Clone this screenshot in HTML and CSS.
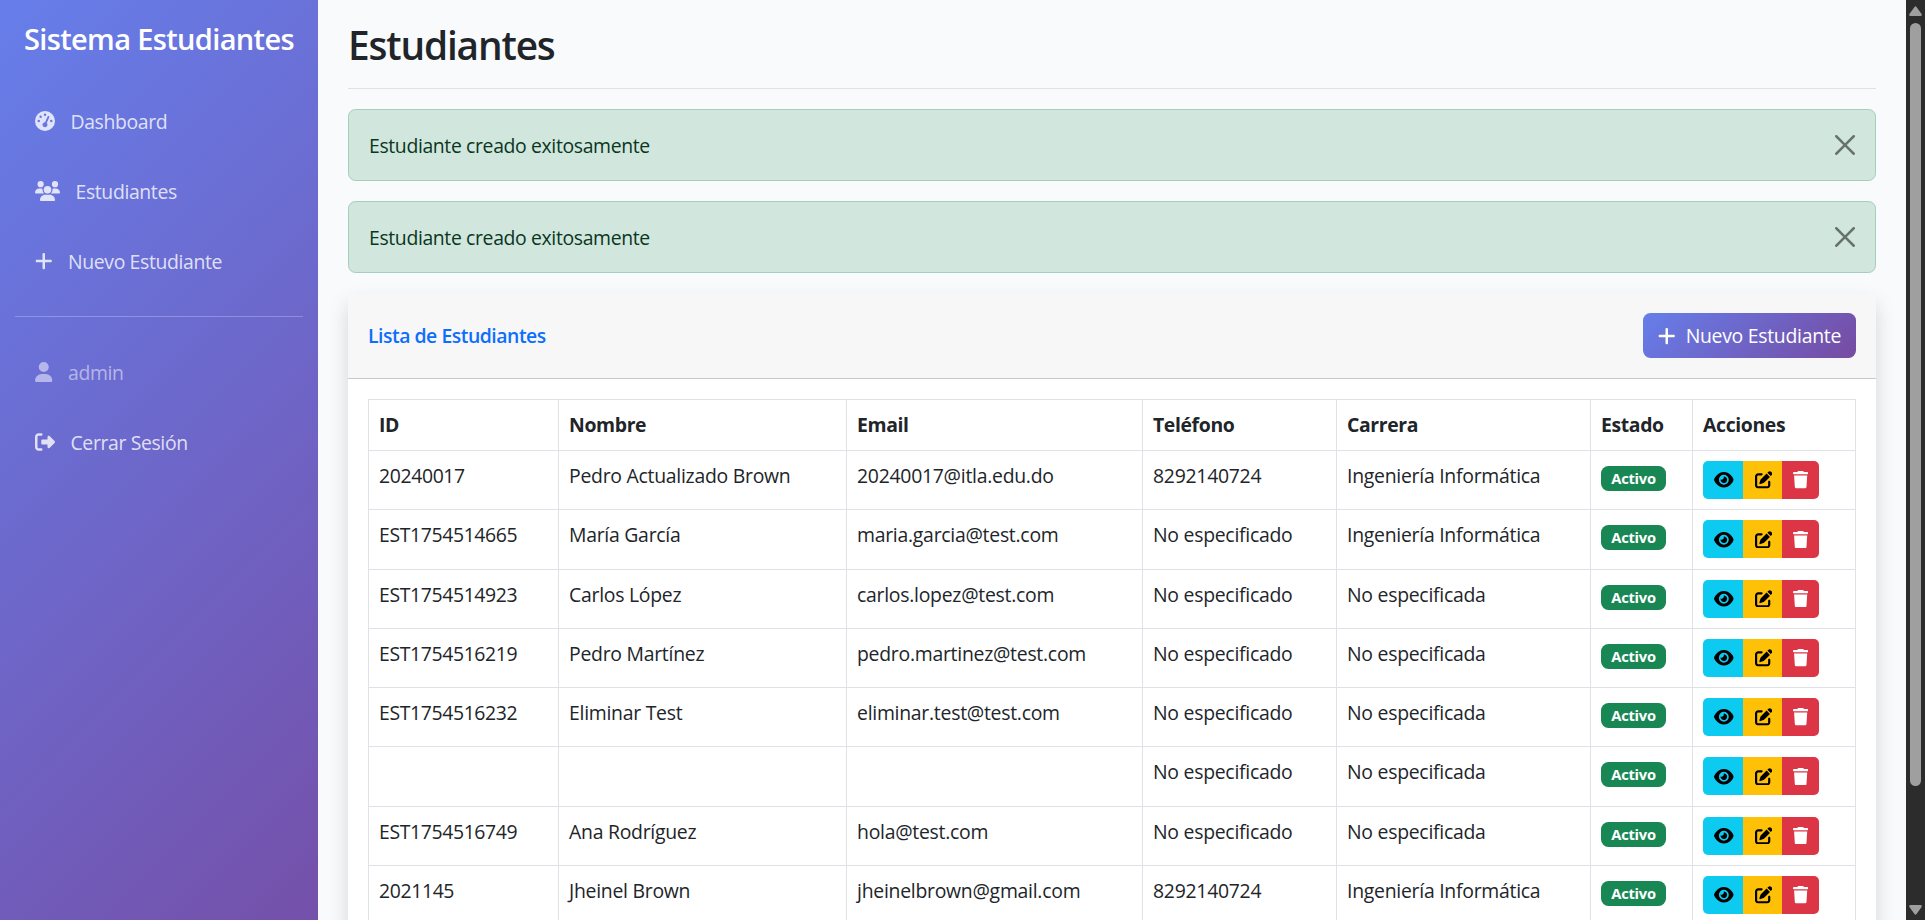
FILE: index.html
```html
<!DOCTYPE html>
<html lang="es">
<head>
<meta charset="utf-8">
<title>Estudiantes</title>
<link rel="stylesheet" href="styles.css">
</head>
<body>
<svg class="sprite" aria-hidden="true">
  <symbol id="gauge" viewBox="0 0 512 512"><path d="M0 256a256 256 0 1 1 512 0A256 256 0 1 1 0 256zM288 96a32 32 0 1 0 -64 0 32 32 0 1 0 64 0zM256 416c35.300 0 64-28.700 64-64c0-17.400-6.900-33.100-18.100-44.600L366 161.700c5.300-12.100-.2-26.300-12.300-31.600s-26.300 .2-31.600 12.300L257.900 288c-.6 0-1.300 0-1.900 0c-35.300 0-64 28.700-64 64s28.700 64 64 64zM176 144a32 32 0 1 0 -64 0 32 32 0 1 0 64 0zM96 288a32 32 0 1 0 0-64 32 32 0 1 0 0 64zm352-32a32 32 0 1 0 -64 0 32 32 0 1 0 64 0z"/></symbol>
  <symbol id="users" viewBox="0 0 640 512"><path d="M144 0a80 80 0 1 1 0 160A80 80 0 1 1 144 0zM512 0a80 80 0 1 1 0 160A80 80 0 1 1 512 0zM0 298.700C0 239.800 47.800 192 106.700 192h42.700c15.900 0 31 3.500 44.600 9.700c-1.300 7.200-1.900 14.700-1.900 22.300c0 38.200 16.800 72.500 43.300 96c-.2 0-.4 0-.7 0H21.300C9.600 320 0 310.400 0 298.700zM405.300 320c-.2 0-.4 0-.7 0c26.600-23.500 43.300-57.800 43.300-96c0-7.600-.7-15-1.900-22.300c13.600-6.300 28.700-9.700 44.600-9.700h42.700C592.200 192 640 239.800 640 298.700c0 11.800-9.600 21.300-21.300 21.300H405.300zM224 224a96 96 0 1 1 192 0 96 96 0 1 1 -192 0zM128 485.300C128 411.700 187.700 352 261.300 352H378.700C452.300 352 512 411.700 512 485.300c0 14.700-11.900 26.700-26.700 26.700H154.700c-14.700 0-26.700-11.900-26.700-26.700z"/></symbol>
  <symbol id="plus" viewBox="0 0 448 512"><path d="M256 80c0-17.700-14.300-32-32-32s-32 14.300-32 32V224H48c-17.700 0-32 14.300-32 32s14.300 32 32 32H192V432c0 17.700 14.300 32 32 32s32-14.300 32-32V288H400c17.700 0 32-14.300 32-32s-14.300-32-32-32H256V80z"/></symbol>
  <symbol id="user" viewBox="0 0 448 512"><path d="M224 256A128 128 0 1 0 224 0a128 128 0 1 0 0 256zm-45.700 48C79.800 304 0 383.800 0 482.300C0 498.700 13.300 512 29.700 512H418.300c16.400 0 29.700-13.300 29.700-29.700C448 383.800 368.200 304 269.700 304H178.300z"/></symbol>
  <symbol id="logout" viewBox="0 0 512 512"><path d="M377.900 105.900L500.700 228.700c7.200 7.200 11.300 17.100 11.300 27.300s-4.100 20.100-11.300 27.300L377.900 406.100c-6.400 6.400-15 9.900-24 9.900c-18.700 0-33.900-15.200-33.900-33.900l0-62.100-128 0c-17.700 0-32-14.300-32-32l0-64c0-17.700 14.300-32 32-32l128 0 0-62.100c0-18.700 15.200-33.900 33.900-33.900c9 0 17.600 3.600 24 9.900zM160 96L96 96c-17.700 0-32 14.300-32 32l0 256c0 17.700 14.300 32 32 32l64 0c17.700 0 32 14.300 32 32s-14.300 32-32 32l-64 0c-53 0-96-43-96-96L0 128C0 75 43 32 96 32l64 0c17.700 0 32 14.300 32 32s-14.300 32-32 32z"/></symbol>
  <symbol id="eye" viewBox="0 0 576 512"><path d="M288 32c-80.800 0-145.500 36.800-192.600 80.600C48.600 156 17.300 208 2.500 243.700c-3.300 7.900-3.300 16.700 0 24.600C17.300 304 48.600 356 95.400 399.400C142.500 443.200 207.200 480 288 480s145.500-36.800 192.600-80.600c46.800-43.500 78.100-95.400 93-131.100c3.300-7.900 3.300-16.700 0-24.600c-14.900-35.700-46.200-87.700-93-131.100C433.500 68.800 368.800 32 288 32zM144 256a144 144 0 1 1 288 0 144 144 0 1 1 -288 0zm144-64c0 35.300-28.700 64-64 64c-7.100 0-13.900-1.200-20.300-3.300c-5.500-1.800-11.900 1.600-11.700 7.400c.3 6.900 1.300 13.800 3.200 20.700c13.700 51.200 66.400 81.600 117.600 67.900s81.600-66.400 67.900-117.600c-11.100-41.500-47.800-69.400-88.600-71.100c-5.800-.2-9.200 6.100-7.400 11.700c2.100 6.400 3.300 13.200 3.300 20.300z"/></symbol>
  <symbol id="edit" viewBox="0 0 512 512"><path d="M471.600 21.700c-21.900-21.900-57.300-21.900-79.200 0L362.300 51.700l97.900 97.900 30.100-30.100c21.900-21.900 21.900-57.300 0-79.200L471.600 21.700zm-299.200 220c-6.100 6.100-10.800 13.600-13.500 21.900l-29.600 88.800c-2.900 8.600-.6 18.100 5.800 24.600s15.900 8.700 24.600 5.800l88.800-29.600c8.200-2.700 15.700-7.400 21.900-13.500L437.700 172.300 339.700 74.300 172.400 241.700zM96 64C43 64 0 107 0 160V416c0 53 43 96 96 96H352c53 0 96-43 96-96V320c0-17.700-14.300-32-32-32s-32 14.300-32 32v96c0 17.700-14.300 32-32 32H96c-17.700 0-32-14.300-32-32V160c0-17.700 14.300-32 32-32h96c17.700 0 32-14.300 32-32s-14.300-32-32-32H96z"/></symbol>
  <symbol id="trash" viewBox="0 0 448 512"><path d="M135.200 17.700L128 32H32C14.300 32 0 46.300 0 64S14.300 96 32 96H416c17.700 0 32-14.300 32-32s-14.300-32-32-32H320l-7.200-14.300C307.400 6.800 296.300 0 284.200 0H163.800c-12.100 0-23.200 6.800-28.600 17.700zM416 128H32L53.200 467c1.600 25.300 22.600 45 47.900 45H346.900c25.300 0 46.300-19.700 47.900-45L416 128z"/></symbol>
  <symbol id="close" viewBox="0 0 16 16"><path d="M.293.293a1 1 0 0 1 1.414 0L8 6.586 14.293.293a1 1 0 1 1 1.414 1.414L9.414 8l6.293 6.293a1 1 0 0 1-1.414 1.414L8 9.414l-6.293 6.293a1 1 0 0 1-1.414-1.414L6.586 8 .293 1.707a1 1 0 0 1 0-1.414z"/></symbol>
</svg>
<div class="app">
  <nav class="sidebar">
    <h4 class="brand">Sistema Estudiantes</h4>
    <a class="nav-link"><svg class="icon w-512"><use href="#gauge"/></svg><span>Dashboard</span></a>
    <a class="nav-link"><svg class="icon w-640"><use href="#users"/></svg><span>Estudiantes</span></a>
    <a class="nav-link"><svg class="icon w-448"><use href="#plus"/></svg><span>Nuevo Estudiante</span></a>
    <hr class="divider">
    <a class="nav-link muted"><svg class="icon w-448"><use href="#user"/></svg><span>admin</span></a>
    <a class="nav-link"><svg class="icon w-512"><use href="#logout"/></svg><span>Cerrar Sesión</span></a>
  </nav>
  <main class="main">
    <header class="page-head"><h1 class="title">Estudiantes</h1></header>
    <div class="alert"><span>Estudiante creado exitosamente</span><svg class="close"><use href="#close"/></svg></div>
    <div class="alert"><span>Estudiante creado exitosamente</span><svg class="close"><use href="#close"/></svg></div>
    <section class="card">
      <div class="card-header">
        <h6 class="card-title">Lista de Estudiantes</h6>
        <a class="btn-new"><svg class="icon w-448"><use href="#plus"/></svg><span>Nuevo Estudiante</span></a>
      </div>
      <div class="card-body">
        <table class="table">
          <colgroup><col class="c-id"><col class="c-name"><col class="c-mail"><col class="c-tel"><col class="c-career"><col class="c-state"><col class="c-act"></colgroup>
          <thead><tr><th>ID</th><th>Nombre</th><th>Email</th><th>Teléfono</th><th>Carrera</th><th>Estado</th><th>Acciones</th></tr></thead>
          <tbody>
            <tr><td>20240017</td><td>Pedro Actualizado Brown</td><td>20240017@itla.edu.do</td><td>8292140724</td><td>Ingeniería Informática</td><td><span class="badge">Activo</span></td><td><div class="group"><a class="act info"><svg class="sm eye"><use href="#eye"/></svg></a><a class="act warn"><svg class="sm edit"><use href="#edit"/></svg></a><a class="act danger"><svg class="sm trash"><use href="#trash"/></svg></a></div></td></tr>
            <tr><td>EST1754514665</td><td>María García</td><td>maria.garcia@test.com</td><td>No especificado</td><td>Ingeniería Informática</td><td><span class="badge">Activo</span></td><td><div class="group"><a class="act info"><svg class="sm eye"><use href="#eye"/></svg></a><a class="act warn"><svg class="sm edit"><use href="#edit"/></svg></a><a class="act danger"><svg class="sm trash"><use href="#trash"/></svg></a></div></td></tr>
            <tr><td>EST1754514923</td><td>Carlos López</td><td>carlos.lopez@test.com</td><td>No especificado</td><td>No especificada</td><td><span class="badge">Activo</span></td><td><div class="group"><a class="act info"><svg class="sm eye"><use href="#eye"/></svg></a><a class="act warn"><svg class="sm edit"><use href="#edit"/></svg></a><a class="act danger"><svg class="sm trash"><use href="#trash"/></svg></a></div></td></tr>
            <tr><td>EST1754516219</td><td>Pedro Martínez</td><td>pedro.martinez@test.com</td><td>No especificado</td><td>No especificada</td><td><span class="badge">Activo</span></td><td><div class="group"><a class="act info"><svg class="sm eye"><use href="#eye"/></svg></a><a class="act warn"><svg class="sm edit"><use href="#edit"/></svg></a><a class="act danger"><svg class="sm trash"><use href="#trash"/></svg></a></div></td></tr>
            <tr><td>EST1754516232</td><td>Eliminar Test</td><td>eliminar.test@test.com</td><td>No especificado</td><td>No especificada</td><td><span class="badge">Activo</span></td><td><div class="group"><a class="act info"><svg class="sm eye"><use href="#eye"/></svg></a><a class="act warn"><svg class="sm edit"><use href="#edit"/></svg></a><a class="act danger"><svg class="sm trash"><use href="#trash"/></svg></a></div></td></tr>
            <tr><td></td><td></td><td></td><td>No especificado</td><td>No especificada</td><td><span class="badge">Activo</span></td><td><div class="group"><a class="act info"><svg class="sm eye"><use href="#eye"/></svg></a><a class="act warn"><svg class="sm edit"><use href="#edit"/></svg></a><a class="act danger"><svg class="sm trash"><use href="#trash"/></svg></a></div></td></tr>
            <tr><td>EST1754516749</td><td>Ana Rodríguez</td><td>hola@test.com</td><td>No especificado</td><td>No especificada</td><td><span class="badge">Activo</span></td><td><div class="group"><a class="act info"><svg class="sm eye"><use href="#eye"/></svg></a><a class="act warn"><svg class="sm edit"><use href="#edit"/></svg></a><a class="act danger"><svg class="sm trash"><use href="#trash"/></svg></a></div></td></tr>
            <tr><td>2021145</td><td>Jheinel Brown</td><td>jheinelbrown@gmail.com</td><td>8292140724</td><td>Ingeniería Informática</td><td><span class="badge">Activo</span></td><td><div class="group"><a class="act info"><svg class="sm eye"><use href="#eye"/></svg></a><a class="act warn"><svg class="sm edit"><use href="#edit"/></svg></a><a class="act danger"><svg class="sm trash"><use href="#trash"/></svg></a></div></td></tr>
          </tbody>
        </table>
      </div>
    </section>
  </main>
  <div class="scrollbar">
    <svg class="arrow" viewBox="0 0 13 10"><path d="M5.500 1Q6.500-.5 7.500 1L12.600 8Q13.300 10 11.500 10H1.500Q-.3 10 .4 8Z"/></svg>
    <div class="thumb"></div>
    <svg class="arrow down" viewBox="0 0 13 10"><path d="M5.500 9Q6.500 10.500 7.500 9L12.600 2Q13.300 0 11.500 0H1.500Q-.3 0 .4 2Z"/></svg>
  </div>
</div>
</body>
</html>
```
FILE: styles.css
```css
* { box-sizing: border-box; }
html, body { height: 920px; overflow: hidden; }
body {
  margin: 0;
  background: #f8fafc;
  color: #212529;
  font-family: "Open Sans", "Noto Sans", sans-serif;
  font-size: 19.4px;
  line-height: 30px;
  letter-spacing: -0.36px;
}
h1, h4, h6 { margin: 0; }
.sprite { display: none; }
.app { display: flex; height: 920px; overflow: hidden; }

.sidebar {
  flex: none;
  width: 318px;
  height: 1063px;
  padding: 21px 15px 20px;
  background: linear-gradient(135deg, #667eea 0%, #764ba2 100%);
}
.brand {
  margin-bottom: 29px;
  color: #fff;
  font-size: 29px;
  font-weight: 600;
  line-height: 36px;
  letter-spacing: -0.65px;
  text-align: center;
  white-space: nowrap;
}
.nav-link {
  display: flex;
  align-items: center;
  height: 70px;
  padding: 0 20px;
  gap: 15.5px;
  color: rgba(255, 255, 255, .8);
}
.nav-link span, .alert span, .btn-new span, .card-title { padding-top: 1px; }
.nav-link.muted { color: rgba(255, 255, 255, .5); }
.icon { flex: none; height: 20px; fill: currentColor; }
.w-448 { width: 17.5px; }
.w-512 { width: 20px; }
.w-640 { width: 25px; }
.divider { height: 1px; margin: 20px 0; border: 0; background: rgba(255, 255, 255, .25); }

.main { flex: none; width: 1588px; padding: 20px 30px 0; }
.page-head { height: 69px; margin-bottom: 20px; border-bottom: 1px solid #dee2e6; }
.title { font-size: 38.8px; font-weight: 600; line-height: 51px; letter-spacing: -1.15px; }
.alert {
  display: flex;
  align-items: center;
  justify-content: space-between;
  height: 72px;
  margin-bottom: 20px;
  padding: 0 20px;
  border: 1px solid #a3cfbb;
  border-radius: 7.5px;
  background: #d1e7dd;
  color: #0a3622;
}
.close { width: 20px; height: 20px; fill: #000; opacity: .5; }

.card {
  border-radius: 7.5px;
  background: #fff;
  box-shadow: 0 10px 20px rgba(0, 0, 0, .15);
}
.card-header {
  display: flex;
  align-items: center;
  justify-content: space-between;
  height: 86px;
  padding: 0 20px;
  border-bottom: 1px solid #c9c9ca;
  border-radius: 7.5px 7.5px 0 0;
  background: #f7f7f7;
}
.card-title { color: #0d6efd; font-size: 19.4px; font-weight: 600; letter-spacing: -0.47px; }
.btn-new {
  display: flex;
  align-items: center;
  gap: 10px;
  height: 45px;
  padding: 0 15px;
  border-radius: 7.5px;
  background: linear-gradient(135deg, #667eea 0%, #764ba2 100%);
  color: #fff;
  letter-spacing: -0.28px;
}
.card-body { padding: 20px 20px 200px; }

.table { width: 1488px; table-layout: fixed; border-collapse: collapse; }
.c-id { width: 190px; }
.c-name { width: 288px; }
.c-mail { width: 296px; }
.c-tel { width: 194px; }
.c-career { width: 254px; }
.c-state { width: 102px; }
.c-act { width: 163px; }
.table th, .table td {
  padding: 10px;
  border: 1px solid #dee2e6;
  text-align: left;
  vertical-align: top;
  white-space: nowrap;
}
.table th { height: 51px; font-weight: 700; }
.table td { height: 59.25px; padding-bottom: 0; letter-spacing: -0.26px; }
.table td:first-child { letter-spacing: -0.36px; }
.badge {
  display: block;
  width: 65px;
  height: 25px;
  margin-top: 5px;
  border-radius: 7.5px;
  background: #198754;
  color: #fff;
  font-size: 14.7px;
  font-weight: 700;
  line-height: 25px;
  text-align: center;
}
.group { display: flex; width: 116px; height: 38px; overflow: hidden; border-radius: 5px; }
.act { display: flex; align-items: center; justify-content: center; }
.info { width: 40.4px; padding-left: 1.5px; background: #0dcaf0; color: #000; }
.warn { width: 38.9px; padding-left: 1px; background: #ffc107; color: #000; }
.danger { width: 36.7px; background: #dc3545; color: #fff; }
.sm { flex: none; height: 17.5px; fill: currentColor; }
.eye { width: 19.7px; }
.edit { width: 17.5px; }
.trash { width: 15.3px; }

.scrollbar {
  display: flex;
  flex: none;
  flex-direction: column;
  align-items: center;
  width: 19px;
  padding: 6px 0 5px;
  background: #2c2c2c;
}
.arrow { flex: none; width: 13px; height: 10px; fill: #9f9f9f; }
.arrow.down { margin-top: auto; }
.thumb { width: 11px; height: 763px; margin-top: 7px; border-radius: 6px; background: #9f9f9f; }
```
